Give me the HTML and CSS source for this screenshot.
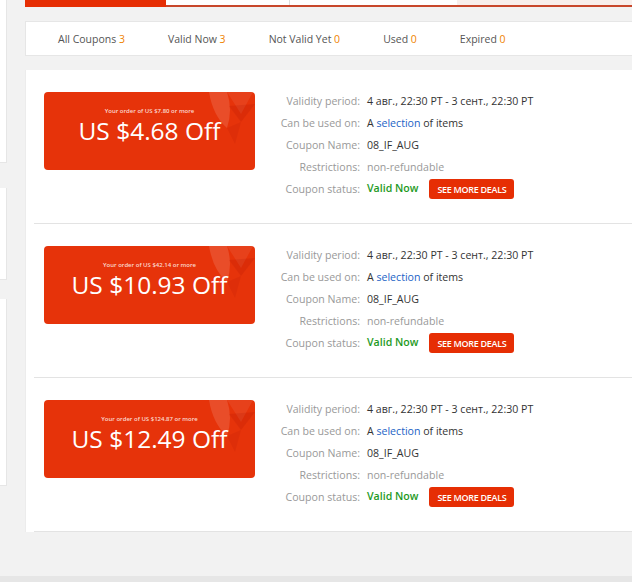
FILE: index.html
```html
<!DOCTYPE html>
<html lang="en">
<head>
    <meta charset="UTF-8">
    <meta name="viewport" content="width=device-width, initial-scale=1.0">
    <title>My Coupons</title>
    <link rel="stylesheet" href="styles.css">
</head>
<body>

    <div class="page">

        <!-- Left sidebar (mostly scrolled out of view) -->
        <div class="sidebar">
            <div class="side-box side-box-1"></div>
            <div class="side-box side-box-2"></div>
            <div class="side-box side-box-3"></div>
        </div>

        <div class="main">

            <!-- Top tabs -->
            <div class="tabs">
                <div class="tab tab-active"></div>
                <div class="tab tab-2"></div>
                <div class="tab tab-3"></div>
                <div class="tab tab-rest"></div>
            </div>

            <!-- Coupon filters -->
            <div class="filters">
                <span class="filter">All Coupons <b>3</b></span>
                <span class="filter">Valid Now <b>3</b></span>
                <span class="filter">Not Valid Yet <b>0</b></span>
                <span class="filter">Used <b>0</b></span>
                <span class="filter">Expired <b>0</b></span>
            </div>

            <!-- Coupon list -->
            <div class="coupon-list">

                <div class="coupon-item">
                    <div class="coupon-card">
                        <svg class="card-deco" width="46" height="54" viewBox="0 0 46 54">
                            <path d="M0 0 H18 Q24 18 18 36 Q4 24 0 0 Z" fill="rgba(255,255,255,0.13)"/>
                            <path d="M18 0 H44 L32 22 Z" fill="rgba(255,255,255,0.07)"/>
                            <path d="M20 14 L46 12 L32 30 Z" fill="rgba(140,0,0,0.12)"/>
                            <path d="M18 36 L32 30 L26 52 Z" fill="rgba(140,0,0,0.09)"/>
                        </svg>
                        <div class="card-min">Your order of US $7.80 or more</div>
                        <div class="card-amount">US $4.68 Off</div>
                    </div>
                    <div class="coupon-info">
                        <span class="info-label">Validity period:</span>
                        <span class="info-value">4 авг., 22:30 PT - 3 сент., 22:30 PT</span>
                        <span class="info-label">Can be used on:</span>
                        <span class="info-value">A&nbsp;<span class="link">selection</span>&nbsp;of items</span>
                        <span class="info-label">Coupon Name:</span>
                        <span class="info-value">08_IF_AUG</span>
                        <span class="info-label">Restrictions:</span>
                        <span class="info-value muted">non-refundable</span>
                        <span class="info-label">Coupon status:</span>
                        <span class="info-value"><span class="status">Valid Now</span><button class="deals-btn">SEE MORE DEALS</button></span>
                    </div>
                </div>

                <div class="coupon-item">
                    <div class="coupon-card">
                        <svg class="card-deco" width="46" height="54" viewBox="0 0 46 54">
                            <path d="M0 0 H18 Q24 18 18 36 Q4 24 0 0 Z" fill="rgba(255,255,255,0.13)"/>
                            <path d="M18 0 H44 L32 22 Z" fill="rgba(255,255,255,0.07)"/>
                            <path d="M20 14 L46 12 L32 30 Z" fill="rgba(140,0,0,0.12)"/>
                            <path d="M18 36 L32 30 L26 52 Z" fill="rgba(140,0,0,0.09)"/>
                        </svg>
                        <div class="card-min">Your order of US $42.14 or more</div>
                        <div class="card-amount">US $10.93 Off</div>
                    </div>
                    <div class="coupon-info">
                        <span class="info-label">Validity period:</span>
                        <span class="info-value">4 авг., 22:30 PT - 3 сент., 22:30 PT</span>
                        <span class="info-label">Can be used on:</span>
                        <span class="info-value">A&nbsp;<span class="link">selection</span>&nbsp;of items</span>
                        <span class="info-label">Coupon Name:</span>
                        <span class="info-value">08_IF_AUG</span>
                        <span class="info-label">Restrictions:</span>
                        <span class="info-value muted">non-refundable</span>
                        <span class="info-label">Coupon status:</span>
                        <span class="info-value"><span class="status">Valid Now</span><button class="deals-btn">SEE MORE DEALS</button></span>
                    </div>
                </div>

                <div class="coupon-item">
                    <div class="coupon-card">
                        <svg class="card-deco" width="46" height="54" viewBox="0 0 46 54">
                            <path d="M0 0 H18 Q24 18 18 36 Q4 24 0 0 Z" fill="rgba(255,255,255,0.13)"/>
                            <path d="M18 0 H44 L32 22 Z" fill="rgba(255,255,255,0.07)"/>
                            <path d="M20 14 L46 12 L32 30 Z" fill="rgba(140,0,0,0.12)"/>
                            <path d="M18 36 L32 30 L26 52 Z" fill="rgba(140,0,0,0.09)"/>
                        </svg>
                        <div class="card-min">Your order of US $124.87 or more</div>
                        <div class="card-amount">US $12.49 Off</div>
                    </div>
                    <div class="coupon-info">
                        <span class="info-label">Validity period:</span>
                        <span class="info-value">4 авг., 22:30 PT - 3 сент., 22:30 PT</span>
                        <span class="info-label">Can be used on:</span>
                        <span class="info-value">A&nbsp;<span class="link">selection</span>&nbsp;of items</span>
                        <span class="info-label">Coupon Name:</span>
                        <span class="info-value">08_IF_AUG</span>
                        <span class="info-label">Restrictions:</span>
                        <span class="info-value muted">non-refundable</span>
                        <span class="info-label">Coupon status:</span>
                        <span class="info-value"><span class="status">Valid Now</span><button class="deals-btn">SEE MORE DEALS</button></span>
                    </div>
                </div>

            </div>
        </div>
    </div>

    <div class="footer"></div>

</body>
</html>
```

FILE: styles.css
```css
html, body {
    margin: 0;
    padding: 0;
}
body {
    font-family: "Open Sans", Arial, sans-serif;
    font-size: 10.6px;
    color: #333;
    background-color: #f2f2f2;
    overflow: hidden;
    height: 582px;
    position: relative;
}
.page {
    display: flex;
    align-items: flex-start;
}

/* sidebar */
.sidebar {
    width: 7px;
    flex-shrink: 0;
    display: flex;
    flex-direction: column;
}
.side-box {
    background-color: #fff;
    border-right: 1px solid #e6e6e6;
    border-bottom: 1px solid #e6e6e6;
}
.side-box-1 {
    height: 162px;
}
.side-box-2 {
    height: 91px;
    margin-top: 25px;
}
.side-box-3 {
    height: 186px;
    margin-top: 19px;
}

/* main column */
.main {
    margin-left: 18px;
    width: 640px;
    flex-shrink: 0;
}
.tabs {
    display: flex;
    height: 5px;
    border-bottom: 2px solid #c8472b;
}
.tab {
    height: 5px;
    background-color: #fff;
}
.tab-active {
    width: 141px;
    height: 7px;
    background-color: #e62e04;
}
.tab-2 {
    width: 123px;
    border-right: 1px solid #ddd;
}
.tab-3 {
    width: 167px;
}
.tab-rest {
    flex: 1;
    background-color: #f8efec;
}

.filters {
    margin-top: 14px;
    height: 33px;
    background-color: #fff;
    border: 1px solid #e6e6e6;
    border-right: none;
    display: flex;
    align-items: center;
    gap: 43px;
    padding-left: 32px;
    font-size: 10.5px;
}
.filter {
    color: #555;
}
.filter b {
    font-weight: normal;
    color: #f08300;
}

.coupon-list {
    margin-top: 14px;
    background-color: #fff;
    border-left: 1px solid #ececec;
}
.coupon-item {
    display: flex;
    margin-left: 8px;
    padding: 22px 0 23px 10px;
    border-bottom: 1px solid #e3e3e3;
    height: 108px;
}

.coupon-card {
    position: relative;
    width: 211px;
    height: 78px;
    background-color: #e6330a;
    border-radius: 4px;
    color: #fff;
    text-align: center;
    overflow: hidden;
    flex-shrink: 0;
}
.card-deco {
    position: absolute;
    top: 0;
    right: 0;
}
.card-min {
    margin-top: 15px;
    font-size: 6px;
    font-weight: 600;
    color: #fbd9cf;
}
.card-amount {
    font-size: 24.5px;
    line-height: 30px;
    margin-top: 1px;
}

.coupon-info {
    display: grid;
    grid-template-columns: 92px auto;
    column-gap: 7px;
    grid-auto-rows: 22px;
    align-items: center;
    margin-left: 13px;
    margin-top: -2px;
}
.info-label {
    color: #999;
    text-align: right;
}
.info-value {
    color: #333;
    white-space: nowrap;
}
.link {
    color: #2363c6;
}
.info-value.muted {
    color: #999;
}
.status {
    color: #1e9a1e;
    font-weight: 600;
}
.deals-btn {
    margin-left: 11px;
    height: 20px;
    padding: 0 8px;
    vertical-align: middle;
    font-family: "Open Sans", Arial, sans-serif;
    font-size: 9px;
    font-weight: 600;
    letter-spacing: -0.3px;
    color: #fff;
    background-color: #e62e04;
    border: none;
    border-radius: 3px;
    cursor: pointer;
}

.footer {
    position: absolute;
    left: 0;
    right: 0;
    bottom: 0;
    height: 6px;
    background-color: #e6e6e6;
}
```
